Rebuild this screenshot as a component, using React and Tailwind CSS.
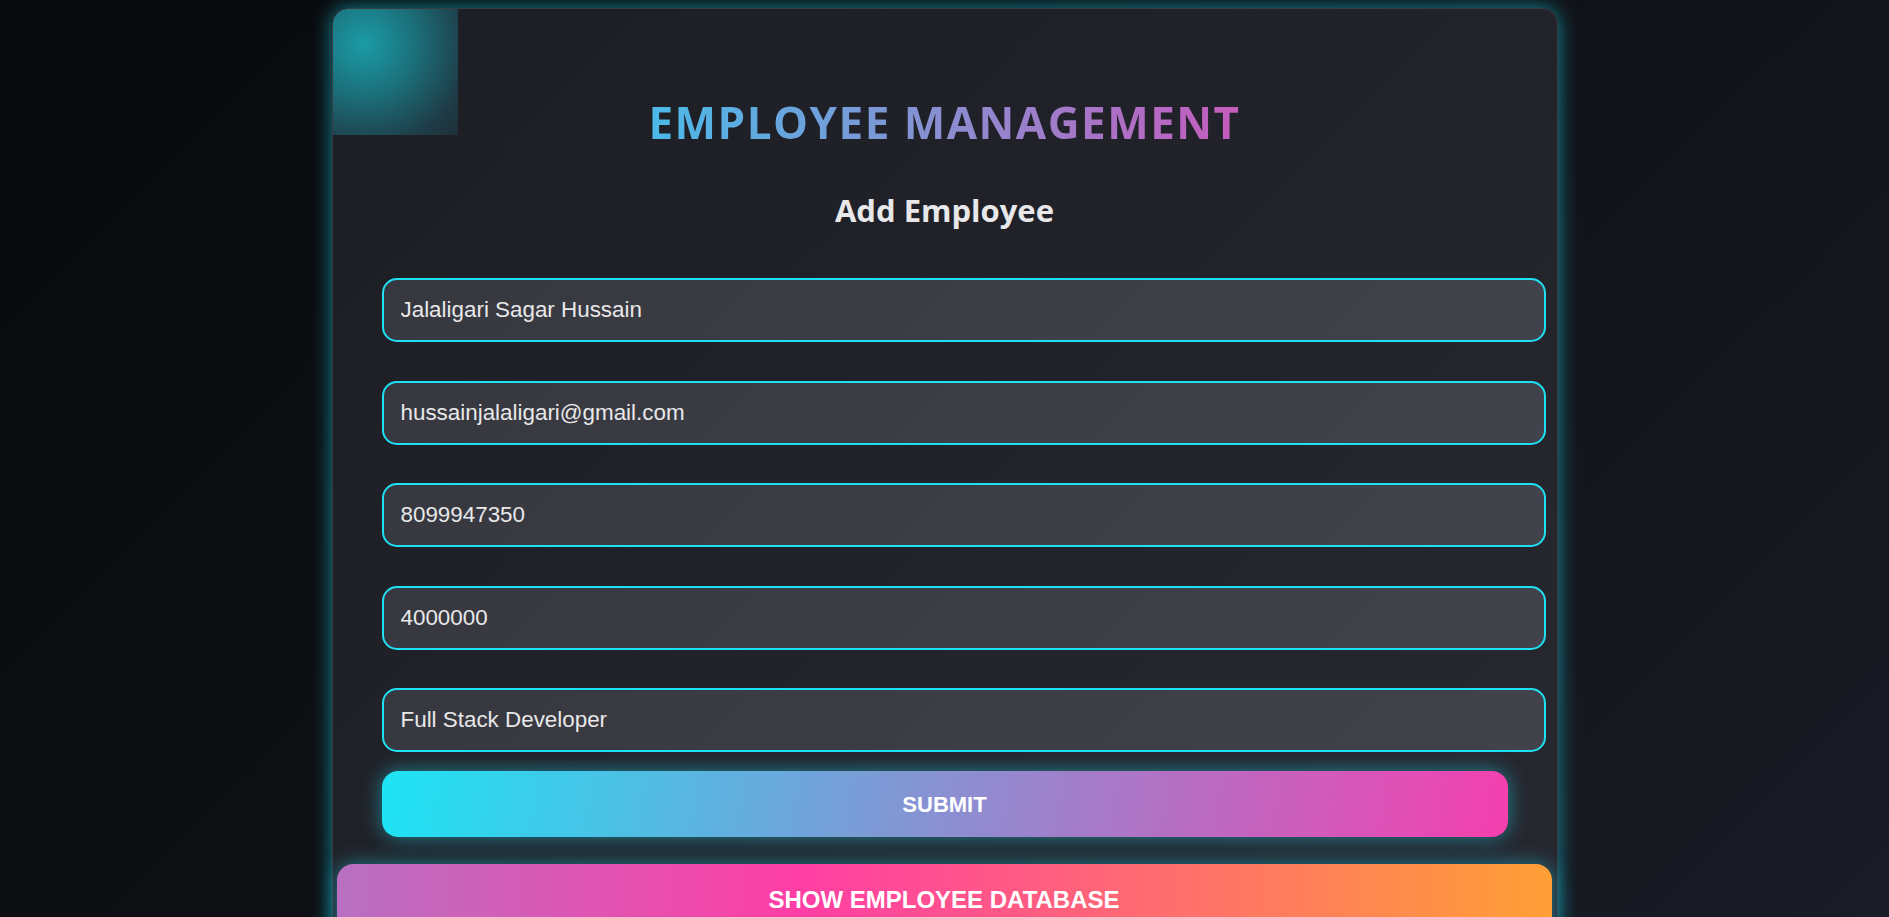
import React from 'react';

const fields = [
    'Jalaligari Sagar Hussain',
    'hussainjalaligari@gmail.com',
    '8099947350',
    '4000000',
    'Full Stack Developer'
];

export default function App() {
    return (
        <div className="min-h-screen bg-[linear-gradient(135deg,#08090c_0%,#0e1015_45%,#1a1c26_100%)] flex justify-center pt-[8px] font-['Liberation_Sans',Arial,sans-serif]">
            <div className="relative w-[1226px] h-[960px] rounded-[16px] border border-[#3a3c44] bg-[linear-gradient(135deg,#1d1e24_0%,#22232a_50%,#272830_100%)] shadow-[0_0_20px_rgba(24,200,220,0.65)]">
                {/* corner glow square */}
                <div className="absolute left-0 top-0 w-[125px] h-[126px] rounded-tl-[15px] bg-[radial-gradient(circle_at_25%_28%,#1a9ca6_0%,#1b6f7a_40%,#1e3c47_80%,#1f2f38_100%)]" />

                <div className="relative flex flex-col items-center pt-[91px]">
                    <h1 className="font-['Open_Sans',sans-serif] font-bold text-[44px] leading-none tracking-[1.5px] uppercase bg-[linear-gradient(90deg,#4abae8_0%,#8a8ed1_50%,#c65bbd_100%)] bg-clip-text text-transparent">
                        Employee Management
                    </h1>
                    <h2 className="mt-[51px] font-['Open_Sans',sans-serif] font-bold text-[31px] leading-none text-[#e8e8ea]">
                        Add Employee
                    </h2>
                </div>

                <form className="relative px-[49px] mt-[52px] flex flex-col" onSubmit={(e) => e.preventDefault()}>
                    <div className="flex flex-col gap-[38.5px]">
                        {fields.map((value) => (
                            <input
                                key={value}
                                type="text"
                                defaultValue={value}
                                className="box-content w-full h-[60px] px-[17px] rounded-[15px] border-2 border-[#1fe0f2] bg-[linear-gradient(135deg,#37383f_0%,#3d3e46_60%,#41424b_100%)] text-[22.4px] text-[#e8e8ea] outline-none"
                            />
                        ))}
                    </div>
                    <button
                        type="submit"
                        className="mt-[19px] h-[66px] w-full rounded-[16px] bg-[linear-gradient(100deg,#1de4f4_0%,#8a90d2_50%,#f53fae_100%)] shadow-[0_0_20px_rgba(30,210,235,0.55)] text-white font-bold text-[22px] uppercase"
                    >
                        Submit
                    </button>
                </form>

                <div className="relative mt-[27px] px-[4px]">
                    <button
                        type="button"
                        className="w-[1215px] h-[72px] rounded-[16px] bg-[linear-gradient(90deg,#b870c2_0%,#ff3ea5_38%,#ff9f35_100%)] shadow-[0_0_20px_rgba(30,210,235,0.5)] text-white font-bold text-[24px] uppercase"
                    >
                        Show Employee Database
                    </button>
                </div>
            </div>
        </div>
    );
}
